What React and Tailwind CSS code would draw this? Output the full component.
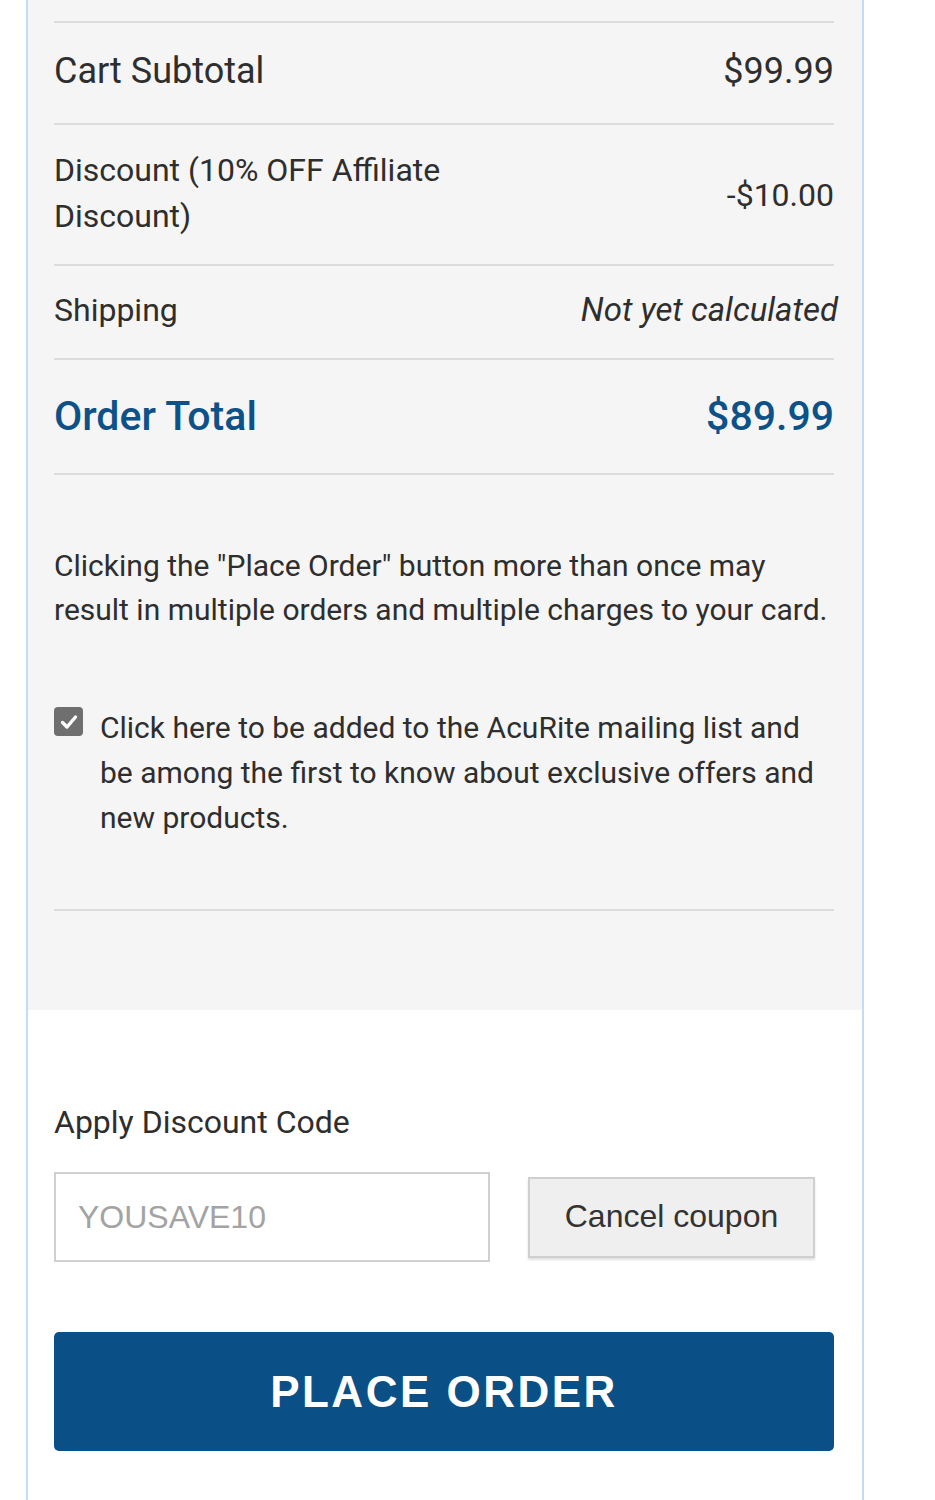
export default function App() {
  return (
    <div className="w-[935px] h-[1500px] bg-white overflow-hidden font-['Roboto',sans-serif] text-[#2e2e2e]">
      <div className="ml-[26px] w-[838px] h-full border-x-2 border-[#c6dbf3] flex flex-col">
        <div className="bg-[#f5f5f5] pl-[26px] pr-[28px] pt-[21px] h-[1010px] shrink-0">
          <div className="h-[102px] border-t-2 border-[#dcdcdc] flex items-center justify-between text-[36px] pb-[4px]">
            <span>Cart Subtotal</span>
            <span>$99.99</span>
          </div>
          <div className="h-[141px] border-t-2 border-[#dcdcdc] flex items-center justify-between text-[32px]">
            <span className="leading-[46px] w-[420px] -mt-[4px]">Discount (10% OFF Affiliate Discount)</span>
            <span>-$10.00</span>
          </div>
          <div className="h-[94px] border-t-2 border-[#dcdcdc] flex items-center justify-between text-[32px] pb-[4px]">
            <span>Shipping</span>
            <span className="italic text-[33px] mr-[-4px]">Not yet calculated</span>
          </div>
          <div className="h-[115px] border-t-2 border-[#dcdcdc] flex items-center justify-between text-[41px] font-medium text-[#0d5189]">
            <span>Order Total</span>
            <span>$89.99</span>
          </div>
          <div className="h-[436px] border-t-2 border-[#dcdcdc] pt-[69px]">
            <p className="text-[30px] leading-[44px]">
              Clicking the "Place Order" button more than once may
              <br />
              result in multiple orders and multiple charges to your card.
            </p>
            <div className="mt-[72px] flex items-start">
              <span className="mt-[3px] w-[29px] h-[29px] shrink-0 rounded-[4px] bg-[#6f6f6f] flex items-center justify-center">
                <svg width="22" height="22" viewBox="0 0 22 22" fill="none">
                  <path d="M4.5 11.5 L9 16 L17.5 6" stroke="white" strokeWidth="3.4" strokeLinecap="round" strokeLinejoin="round" />
                </svg>
              </span>
              <span className="ml-[17px] text-[30px] leading-[45px] mt-[1px]">
                Click here to be added to the AcuRite mailing list and
                <br />
                be among the first to know about exclusive offers and
                <br />
                new products.
              </span>
            </div>
          </div>
          <div className="border-t-2 border-[#dcdcdc]"></div>
        </div>
        <div className="bg-white pl-[26px] pr-[28px] pt-[94px]">
          <div className="text-[32px] leading-[36px]">Apply Discount Code</div>
          <div className="mt-[32px] flex items-center">
            <div className="w-[436px] h-[90px] border-2 border-[#d0d0d0] bg-white flex items-center pl-[22px] font-['Liberation_Sans',sans-serif] text-[32px] text-[#a3a3a3]">
              YOUSAVE10
            </div>
            <button className="ml-[38px] w-[287px] h-[81px] border-2 border-[#cfcfcf] bg-[#efefef] shadow-[0_2px_2px_rgba(0,0,0,0.12)] font-['Liberation_Sans',sans-serif] text-[32px] text-[#333] pb-[3px]">
              Cancel coupon
            </button>
          </div>
          <button className="mt-[70px] w-full h-[119px] rounded-[5px] bg-[#0a4f85] text-white font-['Liberation_Sans',sans-serif] font-bold text-[44px] tracking-[2.5px]">
            PLACE ORDER
          </button>
        </div>
      </div>
    </div>
  );
}
